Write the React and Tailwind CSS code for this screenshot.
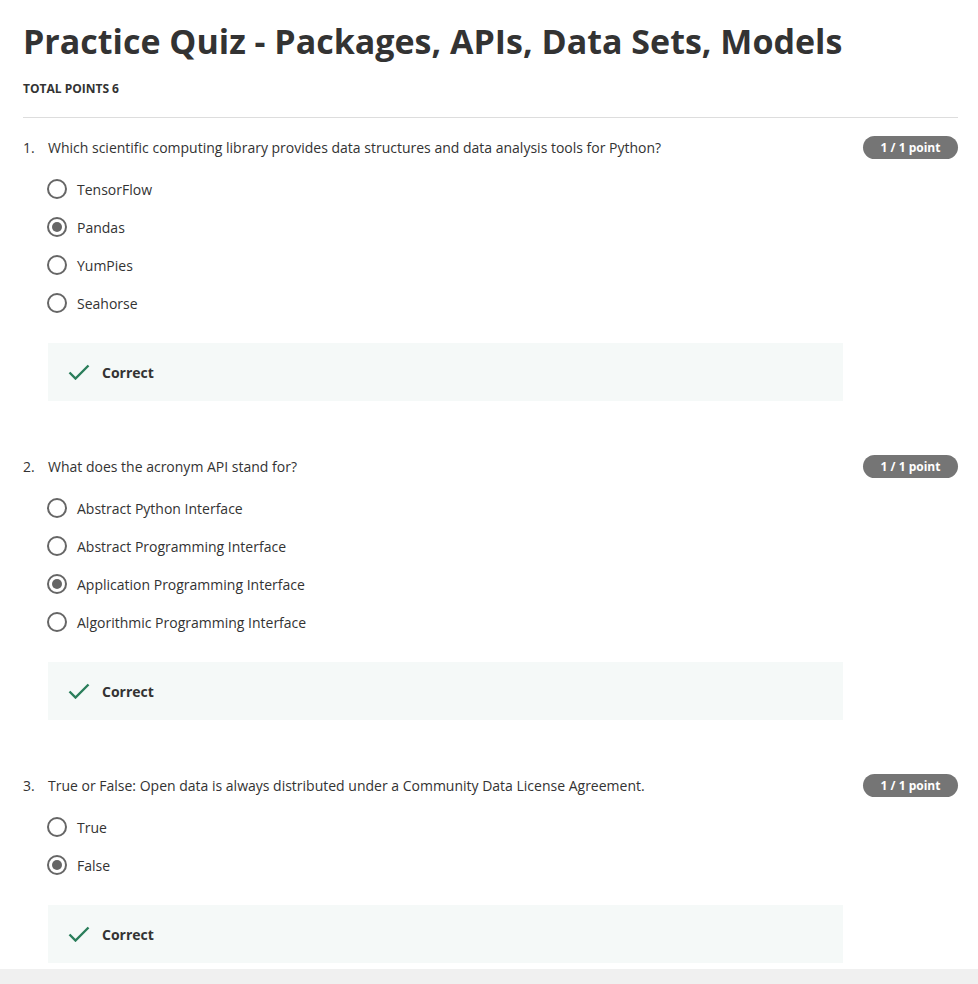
const questions = [
  {
    n: 1,
    text: 'Which scientific computing library provides data structures and data analysis tools for Python?',
    options: ['TensorFlow', 'Pandas', 'YumPies', 'Seahorse'],
    selected: 1,
  },
  {
    n: 2,
    text: 'What does the acronym API stand for?',
    options: [
      'Abstract Python Interface',
      'Abstract Programming Interface',
      'Application Programming Interface',
      'Algorithmic Programming Interface',
    ],
    selected: 2,
  },
  {
    n: 3,
    text: 'True or False: Open data is always distributed under a Community Data License Agreement.',
    options: ['True', 'False'],
    selected: 1,
  },
];

function Radio({ checked }) {
  return (
    <span className="w-5 h-5 rounded-full border-2 border-[#666] flex items-center justify-center shrink-0">
      {checked && <span className="w-[10px] h-[10px] rounded-full bg-[#666]" />}
    </span>
  );
}

function Question({ q }) {
  return (
    <div className="mb-[54px]">
      {/* question row */}
      <div className="flex items-center justify-between h-[23px]">
        <div className="flex text-[14px] text-[#333]">
          <span className="w-[25px]">{q.n}.</span>
          <span>{q.text}</span>
        </div>
        <span className="h-[23px] w-[95px] rounded-full bg-[#757575] text-white text-[12px] font-bold flex items-center justify-center">
          1 / 1 point
        </span>
      </div>

      {/* options */}
      <div className="mt-[11px] pl-[24px]">
        {q.options.map((opt, i) => (
          <div key={opt} className="h-[38px] flex items-center gap-[10px]">
            <Radio checked={i === q.selected} />
            <span className="text-[14px] text-[#333]">{opt}</span>
          </div>
        ))}
      </div>

      {/* feedback */}
      <div className="mt-[21px] ml-[25px] w-[795px] h-[58px] bg-[#f5f9f8] flex items-center pl-[20px] gap-[12px]">
        <svg width="22" height="16" viewBox="0 0 22 16" fill="none">
          <path d="M1.5 8.5 L7.5 14.5 L20.5 1.5" stroke="#2a7e5b" strokeWidth="2.4" />
        </svg>
        <span className="text-[14px] font-bold text-[#333]">Correct</span>
      </div>
    </div>
  );
}

export default function App() {
  return (
    <div className="bg-white font-['Open_Sans',sans-serif] min-h-[984px] flex flex-col">
      <div className="pl-[23px] pr-[20px] pt-[17px] h-[969px] overflow-hidden">
        <h1 className="text-[34px] leading-[48px] font-bold text-[#333]">
          Practice Quiz - Packages, APIs, Data Sets, Models
        </h1>
        <div className="mt-[15px] text-[12px] font-bold text-[#333] uppercase">Total points 6</div>
        <div className="mt-[19px] border-t border-[#ddd]" />
        <div className="mt-[18px]">
          {questions.map((q) => (
            <Question key={q.n} q={q} />
          ))}
        </div>
      </div>
      <div className="flex-1 bg-[#f0f0f0]" />
    </div>
  );
}
